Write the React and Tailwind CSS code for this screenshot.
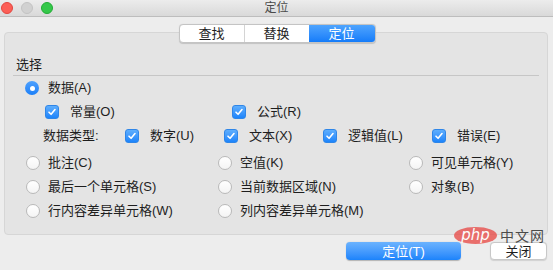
import React from 'react'

const FONT = { fontFamily: '"Liberation Sans", "Noto Sans CJK SC", sans-serif' }

function Check() {
  return (
    <span className="w-[14px] h-[14px] rounded-[3px] bg-gradient-to-b from-[#5eaefd] to-[#1b84fb] border border-[#2f86e8] flex items-center justify-center shrink-0">
      <svg width="10" height="10" viewBox="0 0 10 10" fill="none">
        <path d="M2 5.2 L4.1 7.3 L8 2.6" stroke="white" strokeWidth="1.6" strokeLinecap="round" strokeLinejoin="round" />
      </svg>
    </span>
  )
}

function Radio({ on }) {
  if (on) {
    return (
      <span className="w-[14px] h-[14px] rounded-full bg-gradient-to-b from-[#4ea1fd] to-[#1a7ff8] flex items-center justify-center shrink-0">
        <span className="w-[5px] h-[5px] rounded-full bg-white" />
      </span>
    )
  }
  return <span className="w-[14px] h-[14px] rounded-full bg-gradient-to-b from-white to-[#f4f4f4] border border-[#b9b9b9] shrink-0" />
}

function CheckItem({ label, className = '' }) {
  return (
    <div className={`flex items-center gap-[11px] ${className}`}>
      <Check />
      <span>{label}</span>
    </div>
  )
}

function RadioItem({ label, on, className = '' }) {
  return (
    <div className={`flex items-center gap-[8px] ${className}`}>
      <Radio on={on} />
      <span>{label}</span>
    </div>
  )
}

export default function App() {
  return (
    <div className="w-[553px] h-[270px] bg-[#ededed] relative overflow-hidden text-[13px] text-[#1e1e1e]" style={FONT}>
      {/* title bar */}
      <div className="h-[17px] grid grid-cols-3 items-center bg-gradient-to-b from-[#ececec] to-[#d9d9d9] border-b border-[#bdbdbd]">
        <div className="flex items-center gap-[8px] pl-[1px]">
          <span className="w-[12px] h-[12px] rounded-full bg-[#fc5f57] border border-[#e2463f]" />
          <span className="w-[12px] h-[12px] rounded-full bg-[#d1d1d1] border border-[#c3c3c3]" />
          <span className="w-[12px] h-[12px] rounded-full bg-[#35c84a] border border-[#22ab35]" />
        </div>
        <div className="text-center text-[12px] text-[#4a4a4a] leading-none">定位</div>
        <div />
      </div>

      {/* tabs */}
      <div className="pt-[7px] flex justify-center pl-[1px]">
        <div className="relative z-10 flex h-[19px] rounded-[4px] border border-[#c4c4c4] bg-white overflow-hidden shadow-[0_0.5px_1px_rgba(0,0,0,0.15)] text-[13px] leading-none">
          <div className="w-[65px] flex items-center justify-center border-r border-[#d4d4d4]">查找</div>
          <div className="w-[64px] flex items-center justify-center">替换</div>
          <div className="w-[66px] flex items-center justify-center bg-gradient-to-b from-[#4ea4fe] to-[#137cf9] text-white">定位</div>
        </div>
      </div>

      {/* group box */}
      <div className="mx-[4px] w-[544px] mt-[-11px] h-[203px] rounded-[4px] border border-[#d6d6d6] bg-[#e4e4e4]">
        <div className="pt-[23px] pl-[11px] leading-[18px]">选择</div>
        <div className="mx-[8px] mt-[1px] h-px bg-[#c6c6c6]" />

        <div className="h-[24px] pl-[20px] flex items-center">
          <RadioItem on label="数据(A)" className="gap-[9px]" />
        </div>
        <div className="h-[24px] pl-[40px] flex items-center">
          <CheckItem label="常量(O)" className="w-[187px]" />
          <CheckItem label="公式(R)" />
        </div>
        <div className="h-[24px] pl-[38px] flex items-center">
          <span className="w-[82px]">数据类型:</span>
          <CheckItem label="数字(U)" className="w-[99px] gap-[10px]" />
          <CheckItem label="文本(X)" className="w-[99px] gap-[10px]" />
          <CheckItem label="逻辑值(L)" className="w-[109px] gap-[10px]" />
          <CheckItem label="错误(E)" className="gap-[10px]" />
        </div>

        <div className="mt-[3px] h-[24px] pl-[21px] flex items-center">
          <RadioItem label="批注(C)" className="w-[192px]" />
          <RadioItem label="空值(K)" className="w-[191px]" />
          <RadioItem label="可见单元格(Y)" />
        </div>
        <div className="h-[24px] pl-[21px] flex items-center">
          <RadioItem label="最后一个单元格(S)" className="w-[192px]" />
          <RadioItem label="当前数据区域(N)" className="w-[191px]" />
          <RadioItem label="对象(B)" />
        </div>
        <div className="h-[24px] pl-[21px] flex items-center">
          <RadioItem label="行内容差异单元格(W)" className="w-[192px]" />
          <RadioItem label="列内容差异单元格(M)" />
        </div>
      </div>

      {/* buttons */}
      <div className="mt-[7px] flex justify-end pr-[6px] gap-[29px]">
        <button className="w-[115px] h-[18px] rounded-[4px] bg-gradient-to-b from-[#6bb3fe] to-[#1a83fb] text-white text-[13px] leading-none shadow-[0_0.5px_1px_rgba(0,0,0,0.25)]">定位(T)</button>
        <button className="w-[57px] h-[18px] rounded-[4px] bg-white border border-[#c8c8c8] text-[13px] leading-none shadow-[0_0.5px_1px_rgba(0,0,0,0.12)]">关闭</button>
      </div>

      {/* watermark */}
      <div className="absolute left-[454px] top-[227px] flex items-center gap-[3px] opacity-90 pointer-events-none">
        <span className="w-[43px] h-[17px] rounded-[50%] bg-[#e8524f]/90 text-white text-[15px] leading-none flex items-center justify-center italic" style={{ fontFamily: '"DejaVu Sans", sans-serif' }}>php</span>
        <span className="text-[14px] leading-none text-[#3a3a3a] tracking-[1px]">中文网</span>
      </div>
    </div>
  )
}
